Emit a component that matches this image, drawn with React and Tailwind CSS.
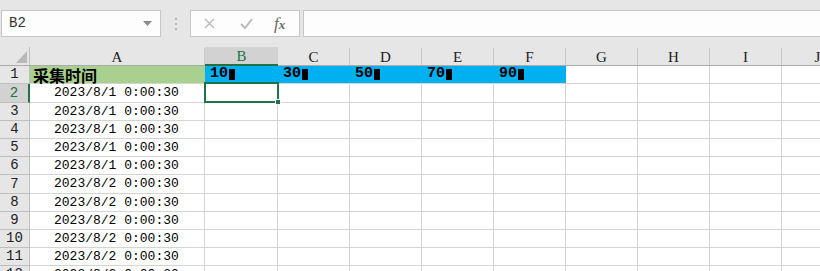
const cols = [
  { key: 'A', w: 'w-[175px]' },
  { key: 'B', w: 'w-[73px]' },
  { key: 'C', w: 'w-[72px]' },
  { key: 'D', w: 'w-[72px]' },
  { key: 'E', w: 'w-[72px]' },
  { key: 'F', w: 'w-[72px]' },
  { key: 'G', w: 'w-[72px]' },
  { key: 'H', w: 'w-[72px]' },
  { key: 'I', w: 'w-[72px]' },
  { key: 'J', w: 'w-[72px]' },
];

const rowHeights = {
  1: 'h-[18px]', 2: 'h-[19px]', 3: 'h-[18px]', 4: 'h-[18px]', 5: 'h-[18px]', 6: 'h-[18px]',
  7: 'h-[19px]', 8: 'h-[18px]', 9: 'h-[18px]', 10: 'h-[18px]', 11: 'h-[18px]', 12: 'h-[18px]',
};

const dates = [
  '2023/8/1 0:00:30', '2023/8/1 0:00:30', '2023/8/1 0:00:30', '2023/8/1 0:00:30', '2023/8/1 0:00:30',
  '2023/8/2 0:00:30', '2023/8/2 0:00:30', '2023/8/2 0:00:30', '2023/8/2 0:00:30', '2023/8/2 0:00:30',
  '2023/8/2 0:00:30',
];

const depths = { B: '10', C: '30', D: '50', E: '70', F: '90' };

const mono = { fontFamily: '"Liberation Mono", "DejaVu Sans Mono", monospace' };
const serif = { fontFamily: '"Liberation Serif", "DejaVu Serif", serif' };

const Tofu = () => <span className="inline-block w-[6px] h-[11px] bg-black ml-[1px] align-[-1px]" />;

function Toolbar() {
  return (
    <div className="flex items-start pt-[10px] h-[47px]">
      {/* name box */}
      <div className="ml-[1px] w-[160px] h-[27px] bg-[#fdfdfd] border border-[#c6c6c6] flex items-center justify-between pl-[7px] pr-[8px]">
        <span className="text-[14px] text-[#333]" style={mono}>B2</span>
        <svg width="9" height="5" viewBox="0 0 9 5"><path d="M0 0h9L4.5 5z" fill="#8a8a8a" /></svg>
      </div>
      <div className="w-[29px] h-[27px] flex flex-col items-center justify-center gap-[3px]">
        <span className="w-[2px] h-[2px] bg-[#b4b4b4]" />
        <span className="w-[2px] h-[2px] bg-[#b4b4b4]" />
        <span className="w-[2px] h-[2px] bg-[#b4b4b4]" />
      </div>
      {/* cancel / enter / fx */}
      <div className="w-[110px] h-[27px] bg-[#fdfdfd] border border-[#c6c6c6] flex items-center pl-[13px]">
        <svg width="11" height="11" viewBox="0 0 11 11"><path d="M1 1l9 9M10 1l-9 9" stroke="#b9b9b9" strokeWidth="1.4" /></svg>
        <svg className="ml-[25px]" width="13" height="11" viewBox="0 0 13 11"><path d="M1 6l4 4 7-9" stroke="#b9b9b9" strokeWidth="2" fill="none" /></svg>
        <span className="ml-[21px] text-[17px] italic text-[#6a6a6a] leading-none" style={serif}>
          f<span className="text-[13px] font-semibold">x</span>
        </span>
      </div>
      <div className="ml-[3px] flex-1 h-[27px] bg-[#fdfdfd] border border-[#c6c6c6] border-r-0" />
    </div>
  );
}

function HeaderRow() {
  return (
    <div className="flex h-[19px] bg-[#e6e6e6] border-b border-[#ababab]">
      <div className="w-[30px] shrink-0 border-r border-[#bfbfbf] relative">
        <svg className="absolute left-[16px] top-[4px]" width="11" height="12" viewBox="0 0 11 12">
          <path d="M11 0V12H0z" fill="#b8b8b8" />
        </svg>
      </div>
      {cols.map((c) => {
        const sel = c.key === 'B';
        return (
          <div
            key={c.key}
            className={`${c.w} shrink-0 flex items-center justify-center text-[15px] pt-[1px] ${
              sel
                ? 'bg-[#d2d2d2] text-[#217346] border-b-2 border-[#217346] -mb-[1px]'
                : 'text-[#222] border-r border-[#c9c9c9] mt-[1px]'
            }`}
            style={serif}
          >
            {c.key}
          </div>
        );
      })}
    </div>
  );
}

function Row({ n }) {
  const sel = n === 2;
  return (
    <div className={`flex ${rowHeights[n]}`}>
      <div
        className={`w-[30px] shrink-0 flex items-center justify-center text-[14px] border-b ${
          sel
            ? 'bg-[#d2d2d2] text-[#217346] border-r-2 border-r-[#217346] border-b-[#bfbfbf]'
            : 'bg-[#e6e6e6] text-[#222] border-r border-[#bfbfbf]'
        }`}
        style={mono}
      >
        {n}
      </div>
      {cols.map((c) => {
        if (n === 1 && c.key === 'A') {
          return (
            <div
              key={c.key}
              className={`${c.w} shrink-0 bg-[#a9d08e] border-b border-[#d4d4d4] flex items-center pl-[3px] text-[16px] font-bold text-black`}
              style={{ fontFamily: '"Noto Sans CJK SC", "Noto Sans", sans-serif' }}
            >
              采集时间
            </div>
          );
        }
        if (n === 1 && depths[c.key]) {
          return (
            <div
              key={c.key}
              className={`${c.w} shrink-0 bg-[#00b0f0] border-b border-[#d4d4d4] flex items-center pl-[5px] text-[15px] font-bold text-black`}
              style={mono}
            >
              {depths[c.key]}
              <Tofu />
            </div>
          );
        }
        if (c.key === 'A' && dates[n - 2]) {
          return (
            <div
              key={c.key}
              className={`${c.w} shrink-0 border-r border-b border-[#d4d4d4] bg-white flex items-center pl-[24px] text-[13px] text-black`}
              style={mono}
            >
              {dates[n - 2]}
            </div>
          );
        }
        return <div key={c.key} className={`${c.w} shrink-0 border-r border-b border-[#d4d4d4] bg-white`} />;
      })}
    </div>
  );
}

export default function App() {
  return (
    <div className="w-[820px] h-[271px] overflow-hidden bg-[#e6e6e6] relative">
      <Toolbar />
      <div className="relative">
        <HeaderRow />
        {[1, 2, 3, 4, 5, 6, 7, 8, 9, 10, 11, 12].map((n) => (
          <Row key={n} n={n} />
        ))}
        {/* active cell B2 */}
        <div className="absolute left-[204px] top-[35px] w-[75px] h-[21px] border-2 border-[#217346] pointer-events-none" />
        <div className="absolute left-[275px] top-[52px] w-[6px] h-[6px] bg-[#217346] border border-white" />
      </div>
    </div>
  );
}
